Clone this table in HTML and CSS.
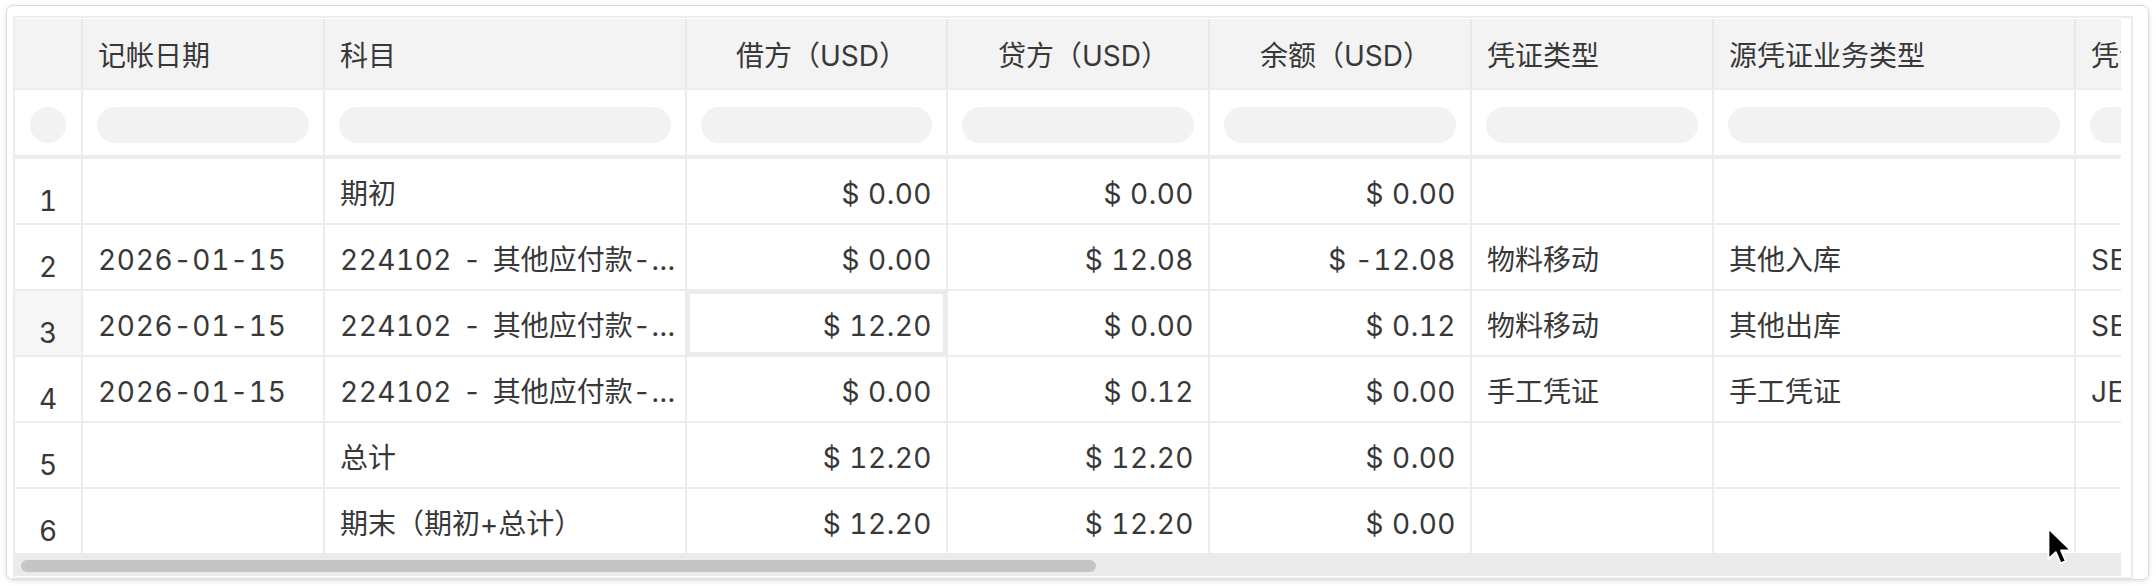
FILE: index.html
```html
<!DOCTYPE html>
<html lang="zh-CN">
<head>
<meta charset="utf-8">
<title>明细账</title>
<link rel="stylesheet" href="styles.css">
</head>
<body>
<div class="card">
  <div class="frame">
    <div class="grid">
      <div class="row head">
        <div class="cell c0"></div>
        <div class="cell c1">记帐日期</div>
        <div class="cell c2">科目</div>
        <div class="cell c3 num">借方（USD）</div>
        <div class="cell c4 num">贷方（USD）</div>
        <div class="cell c5 num">余额（USD）</div>
        <div class="cell c6">凭证类型</div>
        <div class="cell c7">源凭证业务类型</div>
        <div class="cell c8">凭证编号</div>
      </div>
      <div class="row filter">
        <div class="cell c0"><span class="pill dot"></span></div>
        <div class="cell c1"><span class="pill"></span></div>
        <div class="cell c2"><span class="pill"></span></div>
        <div class="cell c3"><span class="pill"></span></div>
        <div class="cell c4"><span class="pill"></span></div>
        <div class="cell c5"><span class="pill"></span></div>
        <div class="cell c6"><span class="pill"></span></div>
        <div class="cell c7"><span class="pill"></span></div>
        <div class="cell c8"><span class="pill"></span></div>
      </div>
      <div class="row data">
        <div class="cell c0 idx">1</div>
        <div class="cell c1"></div>
        <div class="cell c2">期初</div>
        <div class="cell c3 num">$ 0.00</div>
        <div class="cell c4 num">$ 0.00</div>
        <div class="cell c5 num">$ 0.00</div>
        <div class="cell c6"></div>
        <div class="cell c7"></div>
        <div class="cell c8"></div>
      </div>
      <div class="row data">
        <div class="cell c0 idx">2</div>
        <div class="cell c1 date">2026-01-15</div>
        <div class="cell c2"><span class="acct"><span class="lat">224102 - </span>其他应付款<span class="lat">-…</span></span></div>
        <div class="cell c3 num">$ 0.00</div>
        <div class="cell c4 num">$ 12.08</div>
        <div class="cell c5 num">$ -12.08</div>
        <div class="cell c6">物料移动</div>
        <div class="cell c7">其他入库</div>
        <div class="cell c8 lat">SE-2026-0001</div>
      </div>
      <div class="row data">
        <div class="cell c0 idx hl">3</div>
        <div class="cell c1 date">2026-01-15</div>
        <div class="cell c2"><span class="acct"><span class="lat">224102 - </span>其他应付款<span class="lat">-…</span></span></div>
        <div class="cell c3 num sel">$ 12.20</div>
        <div class="cell c4 num">$ 0.00</div>
        <div class="cell c5 num">$ 0.12</div>
        <div class="cell c6">物料移动</div>
        <div class="cell c7">其他出库</div>
        <div class="cell c8 lat">SE-2026-0002</div>
      </div>
      <div class="row data">
        <div class="cell c0 idx">4</div>
        <div class="cell c1 date">2026-01-15</div>
        <div class="cell c2"><span class="acct"><span class="lat">224102 - </span>其他应付款<span class="lat">-…</span></span></div>
        <div class="cell c3 num">$ 0.00</div>
        <div class="cell c4 num">$ 0.12</div>
        <div class="cell c5 num">$ 0.00</div>
        <div class="cell c6">手工凭证</div>
        <div class="cell c7">手工凭证</div>
        <div class="cell c8 lat">JE-2026-0001</div>
      </div>
      <div class="row data">
        <div class="cell c0 idx">5</div>
        <div class="cell c1"></div>
        <div class="cell c2">总计</div>
        <div class="cell c3 num">$ 12.20</div>
        <div class="cell c4 num">$ 12.20</div>
        <div class="cell c5 num">$ 0.00</div>
        <div class="cell c6"></div>
        <div class="cell c7"></div>
        <div class="cell c8"></div>
      </div>
      <div class="row data last">
        <div class="cell c0 idx">6</div>
        <div class="cell c1"></div>
        <div class="cell c2">期末（期初+总计）</div>
        <div class="cell c3 num">$ 12.20</div>
        <div class="cell c4 num">$ 12.20</div>
        <div class="cell c5 num">$ 0.00</div>
        <div class="cell c6"></div>
        <div class="cell c7"></div>
        <div class="cell c8"></div>
      </div>
    </div>
    <div class="hscroll"><div class="thumb"></div></div>
  </div>
  <svg class="cursor" width="28" height="40" viewBox="0 0 28 40">
    <path d="M1.5 1.5 L1.5 32 L8.8 25.2 L13.6 36.4 L18.8 34.2 L14 23.3 L23.8 23.3 Z" fill="#000" stroke="#fff" stroke-width="1.8" stroke-linejoin="round"/>
  </svg>
</div>
</body>
</html>
```

FILE: styles.css
```css
* { box-sizing: border-box; }

body {
  margin: 0;
  background: #fff;
  font-family: Inter, "Noto Sans CJK SC", sans-serif;
  font-size: 28px;
  color: #383838;
}

.card {
  position: relative;
  margin: 5px 7px 6px 6px;
  border: 1px solid #dadada;
  border-radius: 7px;
  box-shadow: 0 1px 5px rgba(0, 0, 0, 0.12);
  padding: 10px 15px 0 6px;
}

.frame {
  border: 2px solid #ececec;
  padding: 1px 10px 1px 0;
}

.grid {
  width: 2106px;
  overflow: hidden;
}

.row {
  display: flex;
  width: max-content;
}

.cell {
  flex: none;
  display: flex;
  align-items: center;
  height: 100%;
  padding: 0 15px;
  border-right: 2px solid #ececec;
  white-space: nowrap;
  overflow: hidden;
  line-height: 40px;
  font-variant-numeric: tabular-nums;
}

.c0 { width: 68px; }
.c1 { width: 242px; }
.c2 { width: 362px; }
.c3 { width: 261px; }
.c4 { width: 262px; }
.c5 { width: 262px; }
.c6 { width: 242px; }
.c7 { width: 362px; }
.c8 { width: 260px; }

/* header */
.head {
  height: 71px;
  background: #f3f3f3;
  border-bottom: 2px solid #ececec;
}
.head .cell {
  padding-top: 4px;
  border-right-color: #e7e7e7;
}
.head .num {
  justify-content: flex-end;
  padding-right: 39px;
}

/* filter row */
.filter {
  height: 69px;
  border-bottom: 4px solid #ececec;
}
.filter .cell {
  align-items: flex-start;
  padding: 17px 14px 0;
}
.pill {
  display: block;
  width: 100%;
  height: 36px;
  border-radius: 18px;
  background: #f2f2f2;
}
.filter .c0 { justify-content: center; padding: 17px 0 0; }
.pill.dot { width: 36px; }

/* data rows */
.data {
  height: 66px;
  border-bottom: 2px solid #ececec;
}
.data.last {
  height: 64px;
  border-bottom: 0;
}
.data .cell { padding-top: 6px; }
.data .num {
  justify-content: flex-end;
  padding-right: 14px;
  letter-spacing: 0.5px;
}
.data .idx {
  justify-content: center;
  padding: 20px 0 0;
}
.date { letter-spacing: 0.7px; }
.lat { letter-spacing: 0.5px; word-spacing: 3px; }
.idx.hl { background: #f6f6f6; }
.sel { box-shadow: inset 0 0 0 3px #ebebeb; }

/* horizontal scrollbar */
.hscroll {
  height: 23px;
  background: #ebebeb;
  padding: 7px 0 0 6px;
  width: 2106px;
}
.thumb {
  width: 1075px;
  height: 12px;
  border-radius: 6px;
  background: #c5c5c5;
}

.cursor {
  position: absolute;
  left: 2040px;
  top: 521px;
}
```
